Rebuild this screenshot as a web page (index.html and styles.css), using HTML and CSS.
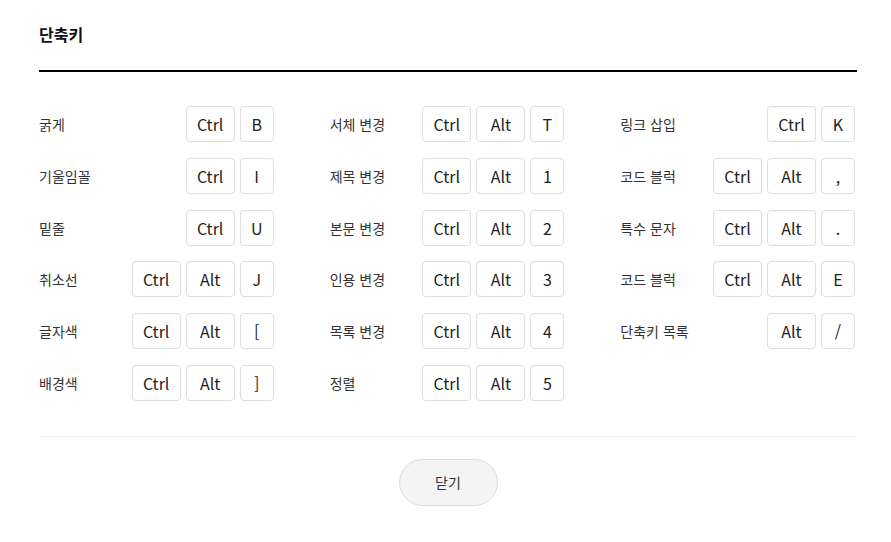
FILE: index.html
```html
<!DOCTYPE html>
<html lang="ko">
<head>
<meta charset="utf-8">
<link rel="stylesheet" href="styles.css">
</head>
<body>
<div class="dialog">
  <div class="header"><h2 class="title">단축키</h2></div>
  <div class="grid">
    <div class="col">
      <div class="row"><span class="label">굵게</span><span class="keys"><kbd class="key">Ctrl</kbd><kbd class="key single">B</kbd></span></div>
      <div class="row"><span class="label">기울임꼴</span><span class="keys"><kbd class="key">Ctrl</kbd><kbd class="key single">I</kbd></span></div>
      <div class="row"><span class="label">밑줄</span><span class="keys"><kbd class="key">Ctrl</kbd><kbd class="key single">U</kbd></span></div>
      <div class="row"><span class="label">취소선</span><span class="keys"><kbd class="key">Ctrl</kbd><kbd class="key">Alt</kbd><kbd class="key single">J</kbd></span></div>
      <div class="row"><span class="label">글자색</span><span class="keys"><kbd class="key">Ctrl</kbd><kbd class="key">Alt</kbd><kbd class="key single">[</kbd></span></div>
      <div class="row"><span class="label">배경색</span><span class="keys"><kbd class="key">Ctrl</kbd><kbd class="key">Alt</kbd><kbd class="key single">]</kbd></span></div>
    </div>
    <div class="col">
      <div class="row"><span class="label">서체 변경</span><span class="keys"><kbd class="key">Ctrl</kbd><kbd class="key">Alt</kbd><kbd class="key single">T</kbd></span></div>
      <div class="row"><span class="label">제목 변경</span><span class="keys"><kbd class="key">Ctrl</kbd><kbd class="key">Alt</kbd><kbd class="key single">1</kbd></span></div>
      <div class="row"><span class="label">본문 변경</span><span class="keys"><kbd class="key">Ctrl</kbd><kbd class="key">Alt</kbd><kbd class="key single">2</kbd></span></div>
      <div class="row"><span class="label">인용 변경</span><span class="keys"><kbd class="key">Ctrl</kbd><kbd class="key">Alt</kbd><kbd class="key single">3</kbd></span></div>
      <div class="row"><span class="label">목록 변경</span><span class="keys"><kbd class="key">Ctrl</kbd><kbd class="key">Alt</kbd><kbd class="key single">4</kbd></span></div>
      <div class="row"><span class="label">정렬</span><span class="keys"><kbd class="key">Ctrl</kbd><kbd class="key">Alt</kbd><kbd class="key single">5</kbd></span></div>
    </div>
    <div class="col">
      <div class="row"><span class="label">링크 삽입</span><span class="keys"><kbd class="key">Ctrl</kbd><kbd class="key single">K</kbd></span></div>
      <div class="row"><span class="label">코드 블럭</span><span class="keys"><kbd class="key">Ctrl</kbd><kbd class="key">Alt</kbd><kbd class="key single">,</kbd></span></div>
      <div class="row"><span class="label">특수 문자</span><span class="keys"><kbd class="key">Ctrl</kbd><kbd class="key">Alt</kbd><kbd class="key single">.</kbd></span></div>
      <div class="row"><span class="label">코드 블럭</span><span class="keys"><kbd class="key">Ctrl</kbd><kbd class="key">Alt</kbd><kbd class="key single">E</kbd></span></div>
      <div class="row"><span class="label">단축키 목록</span><span class="keys"><kbd class="key">Alt</kbd><kbd class="key single">/</kbd></span></div>
    </div>
  </div>
  <div class="footer"><button class="close" type="button">닫기</button></div>
</div>
</body>
</html>
```

FILE: styles.css
```css
html, body {
  margin: 0;
  padding: 0;
  background: #fff;
}
body {
  font-family: "Noto Sans CJK KR", "Noto Sans", sans-serif;
  color: #333;
}
.dialog {
  padding: 0 34px 0 39px;
}
.header {
  box-sizing: border-box;
  height: 72px;
  border-bottom: 2px solid #000;
  display: flex;
  align-items: center;
}
.title {
  margin: 0;
  font-size: 16px;
  font-weight: 700;
  color: #111;
  line-height: 1;
  position: relative;
  top: -1px;
}
.grid {
  display: grid;
  grid-template-columns: repeat(3, 1fr);
  column-gap: 56px;
  padding: 34px 2px 35px 0;
  border-bottom: 1px solid #ececec;
}
.col {
  display: flex;
  flex-direction: column;
  row-gap: 15.8px;
}
.row {
  display: flex;
  align-items: center;
  height: 36px;
}
.label {
  font-size: 14px;
  color: #333;
}
.keys {
  margin-left: auto;
  display: flex;
  gap: 5px;
}
.key {
  box-sizing: border-box;
  width: 49px;
  height: 36px;
  border: 1px solid #dedede;
  border-radius: 4px;
  background: #fff;
  display: flex;
  align-items: center;
  justify-content: center;
  font-family: "Noto Sans CJK KR", "Noto Sans", sans-serif;
  font-size: 16px;
  color: #222;
}
.key.single {
  width: 34px;
}
.footer {
  display: flex;
  justify-content: center;
  padding-top: 22px;
}
.close {
  width: 99px;
  height: 47px;
  border: 1px solid #dcdcdc;
  border-radius: 24px;
  background: #f4f4f4;
  font-family: "Noto Sans CJK KR", "Noto Sans", sans-serif;
  font-size: 14px;
  color: #333;
  cursor: pointer;
}
```
